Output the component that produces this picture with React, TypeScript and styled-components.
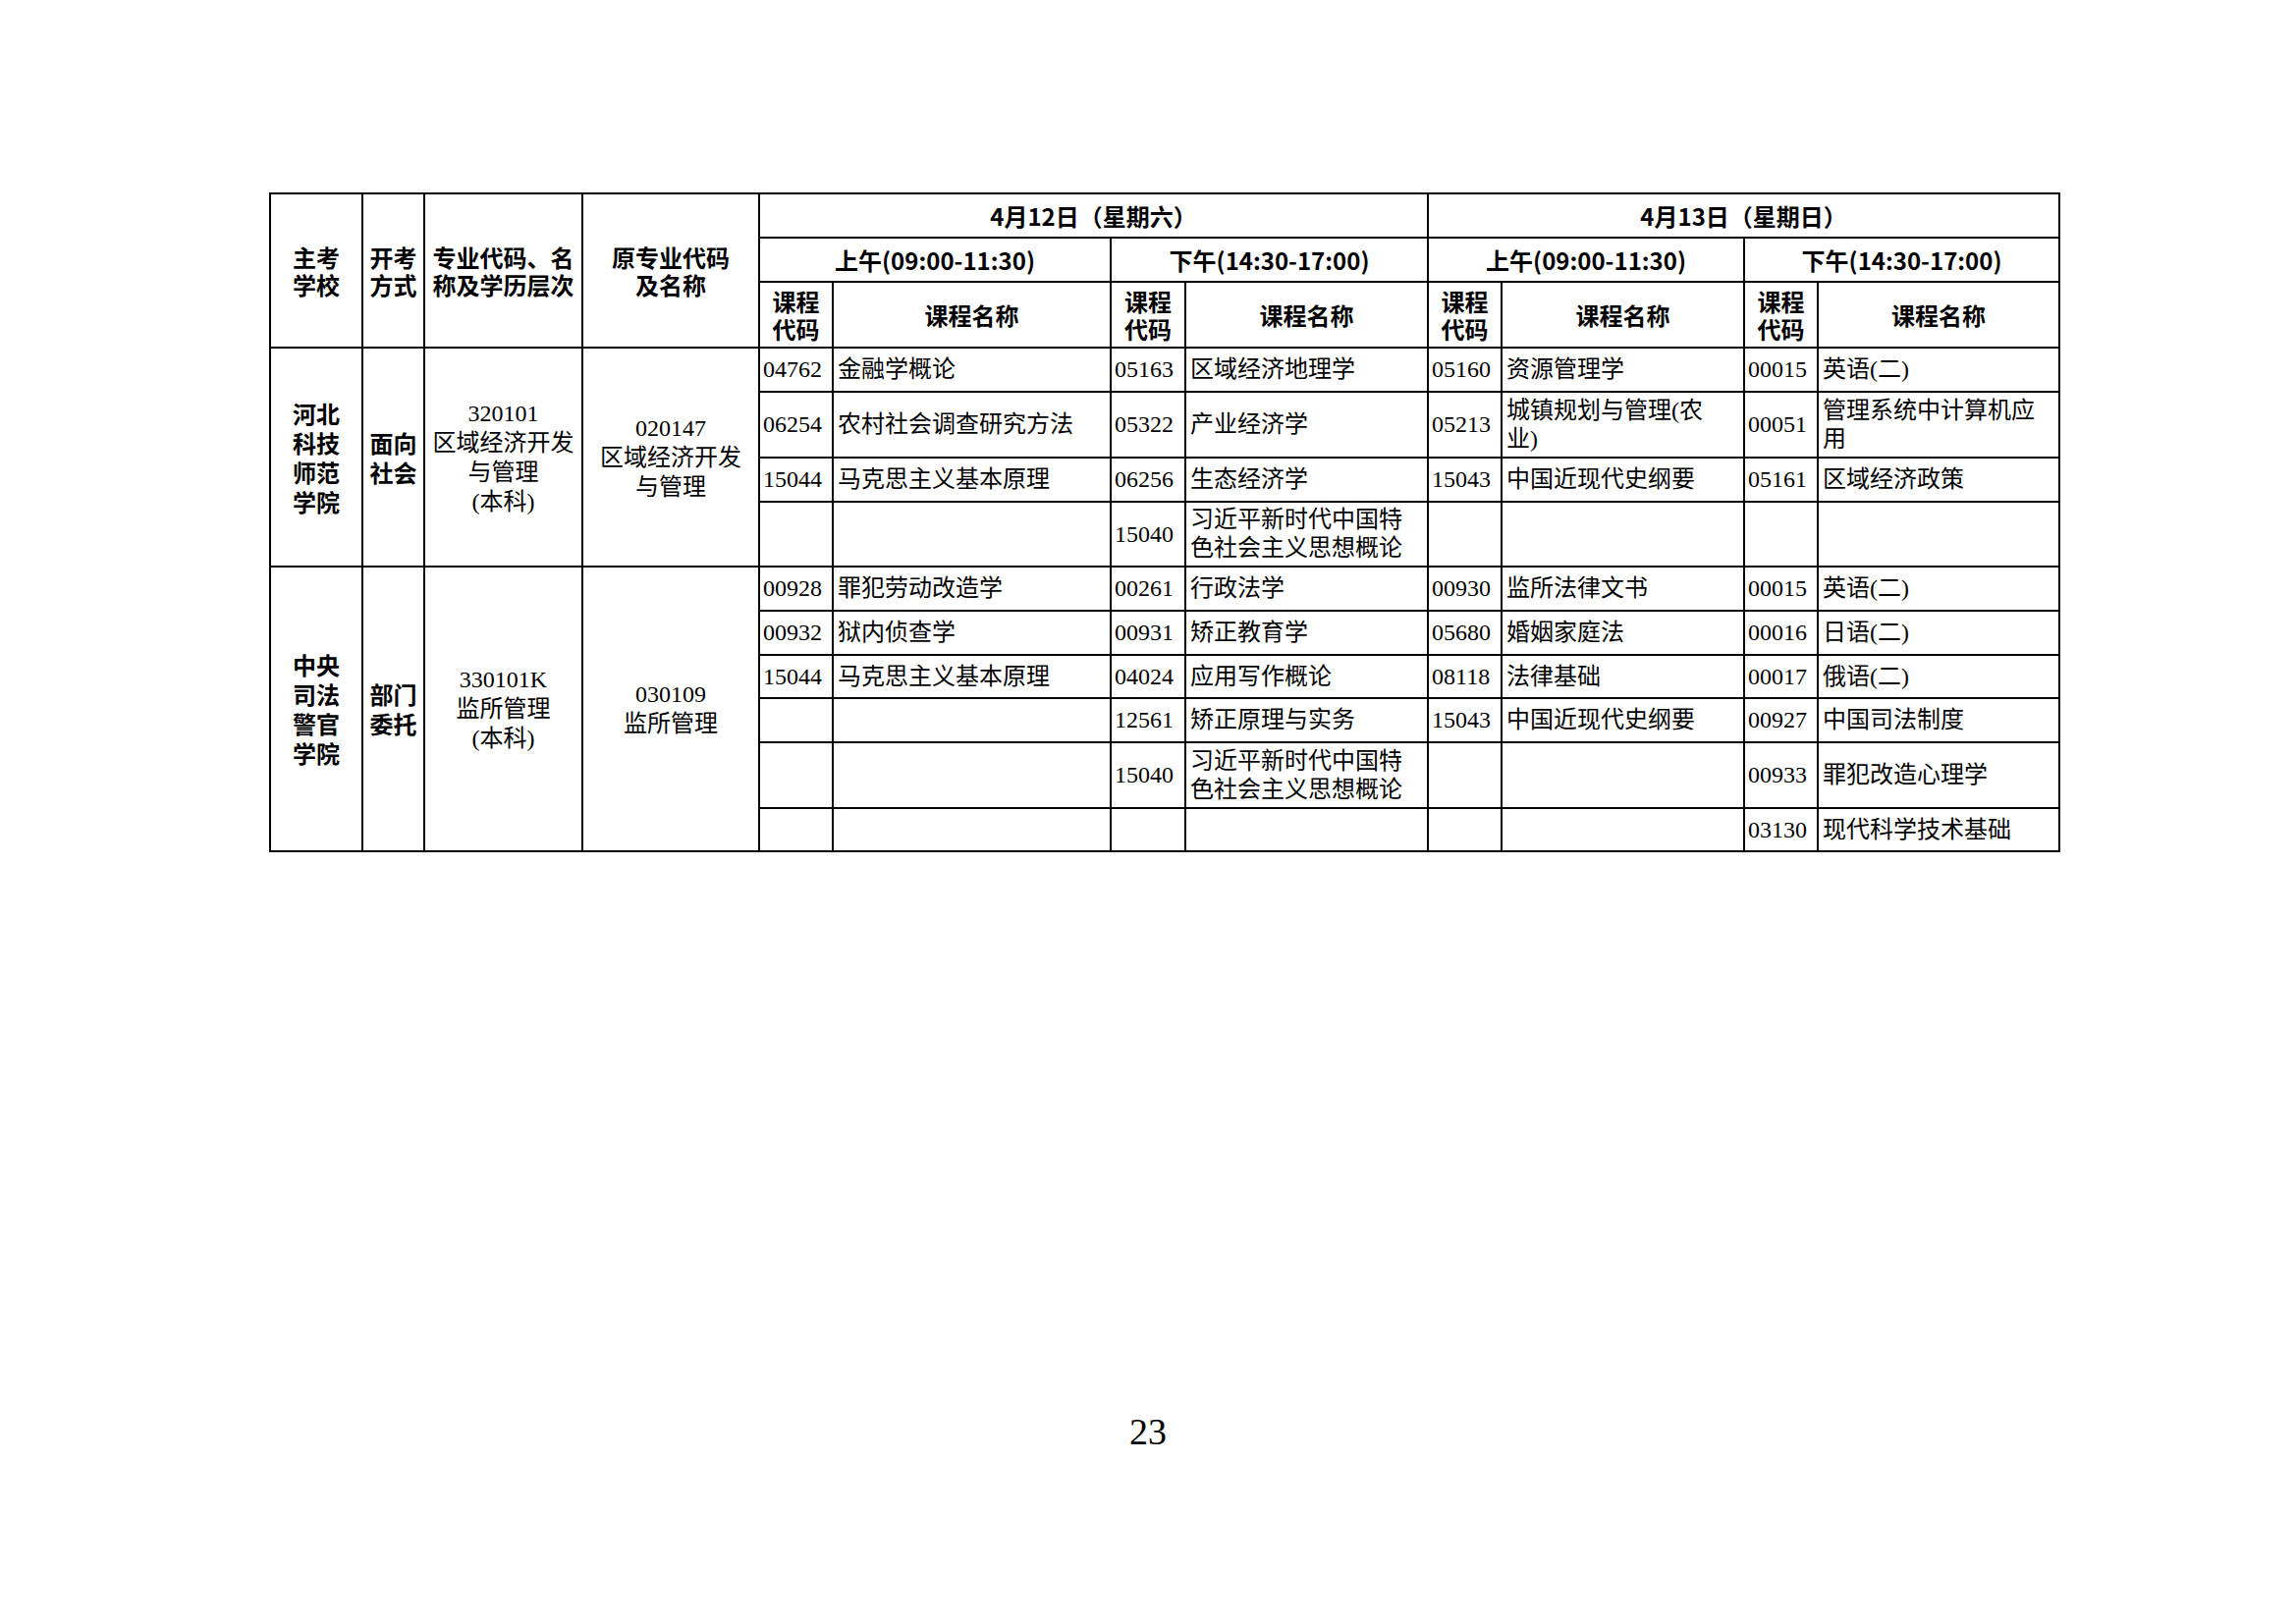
import { FC, Fragment } from 'react';
import styled, { createGlobalStyle } from 'styled-components';

const GlobalStyle = createGlobalStyle`
  html, body {
    margin: 0;
    padding: 0;
    background: #ffffff;
  }
`;

const SERIF = `"Liberation Serif", "Noto Sans CJK SC", serif`;
const HEI = `"Noto Sans CJK SC", "Liberation Sans", sans-serif`;

const Page = styled.div`
  width: 2338px;
  height: 1653px;
  padding-top: 196px;
  box-sizing: border-box;
  display: flex;
  flex-direction: column;
  color: #000;
`;

const TableWrap = styled.div`
  padding-left: 274px;
`;

const Schedule = styled.table`
  border-collapse: collapse;
  table-layout: fixed;
  width: 1824px;
  border: 2px solid #000;
`;

const Row = styled.tr<{ $h: number }>`
  height: ${({ $h }) => $h}px;
`;

const HeadCell = styled.th`
  border: 2px solid #000;
  padding: 0;
  font-family: ${HEI};
  font-weight: 700;
  font-size: 24px;
  line-height: 28px;
  text-align: center;
  vertical-align: middle;
  white-space: pre-line;
`;

const InfoCell = styled.td<{ $bold?: boolean }>`
  border: 2px solid #000;
  padding: 0;
  font-family: ${({ $bold }) => ($bold ? HEI : SERIF)};
  font-weight: ${({ $bold }) => ($bold ? 700 : 400)};
  font-size: 24px;
  line-height: 30px;
  text-align: center;
  vertical-align: middle;
  white-space: pre-line;
`;

const CodeCell = styled.td`
  border: 2px solid #000;
  padding: 0 0 0 3px;
  font-family: ${SERIF};
  font-size: 24px;
  line-height: 29px;
  text-align: left;
  vertical-align: middle;
`;

const NameCell = styled.td`
  border: 2px solid #000;
  padding: 0 4px;
  font-family: ${SERIF};
  font-size: 24px;
  line-height: 29px;
  text-align: left;
  vertical-align: middle;
  white-space: pre-line;
`;

const PageNumber = styled.div`
  margin-top: 571px;
  text-align: center;
  font-family: "Liberation Serif", serif;
  font-size: 38px;
  line-height: 38px;
`;

const colWidths = [94, 63, 161, 180, 75, 283, 76, 247, 75, 247, 75, 246];

type Course = [string, string];

interface Block {
  school: string;
  mode: string;
  major: string;
  origin: string;
  rows: { h: number; courses: Course[] }[];
}

const blocks: Block[] = [
  {
    school: '河北\n科技\n师范\n学院',
    mode: '面向\n社会',
    major: '320101\n区域经济开发\n与管理\n(本科)',
    origin: '020147\n区域经济开发\n与管理',
    rows: [
      {
        h: 45,
        courses: [
          ['04762', '金融学概论'],
          ['05163', '区域经济地理学'],
          ['05160', '资源管理学'],
          ['00015', '英语(二)'],
        ],
      },
      {
        h: 67,
        courses: [
          ['06254', '农村社会调查研究方法'],
          ['05322', '产业经济学'],
          ['05213', '城镇规划与管理(农\n业)'],
          ['00051', '管理系统中计算机应\n用'],
        ],
      },
      {
        h: 45,
        courses: [
          ['15044', '马克思主义基本原理'],
          ['06256', '生态经济学'],
          ['15043', '中国近现代史纲要'],
          ['05161', '区域经济政策'],
        ],
      },
      {
        h: 66,
        courses: [
          ['', ''],
          ['15040', '习近平新时代中国特\n色社会主义思想概论'],
          ['', ''],
          ['', ''],
        ],
      },
    ],
  },
  {
    school: '中央\n司法\n警官\n学院',
    mode: '部门\n委托',
    major: '330101K\n监所管理\n(本科)',
    origin: '030109\n监所管理',
    rows: [
      {
        h: 45,
        courses: [
          ['00928', '罪犯劳动改造学'],
          ['00261', '行政法学'],
          ['00930', '监所法律文书'],
          ['00015', '英语(二)'],
        ],
      },
      {
        h: 45,
        courses: [
          ['00932', '狱内侦查学'],
          ['00931', '矫正教育学'],
          ['05680', '婚姻家庭法'],
          ['00016', '日语(二)'],
        ],
      },
      {
        h: 44,
        courses: [
          ['15044', '马克思主义基本原理'],
          ['04024', '应用写作概论'],
          ['08118', '法律基础'],
          ['00017', '俄语(二)'],
        ],
      },
      {
        h: 45,
        courses: [
          ['', ''],
          ['12561', '矫正原理与实务'],
          ['15043', '中国近现代史纲要'],
          ['00927', '中国司法制度'],
        ],
      },
      {
        h: 67,
        courses: [
          ['', ''],
          ['15040', '习近平新时代中国特\n色社会主义思想概论'],
          ['', ''],
          ['00933', '罪犯改造心理学'],
        ],
      },
      {
        h: 44,
        courses: [
          ['', ''],
          ['', ''],
          ['', ''],
          ['03130', '现代科学技术基础'],
        ],
      },
    ],
  },
];

const sessions = ['上午(09:00-11:30)', '下午(14:30-17:00)', '上午(09:00-11:30)', '下午(14:30-17:00)'];

const BlockRows: FC<{ block: Block }> = ({ block }) => (
  <>
    {block.rows.map((row, i) => (
      <Row $h={row.h} key={i}>
        {i === 0 && (
          <>
            <InfoCell $bold rowSpan={block.rows.length}>{block.school}</InfoCell>
            <InfoCell $bold rowSpan={block.rows.length}>{block.mode}</InfoCell>
            <InfoCell rowSpan={block.rows.length}>{block.major}</InfoCell>
            <InfoCell rowSpan={block.rows.length}>{block.origin}</InfoCell>
          </>
        )}
        {row.courses.map(([code, name], j) => (
          <Fragment key={j}>
            <CodeCell>{code}</CodeCell>
            <NameCell>{name}</NameCell>
          </Fragment>
        ))}
      </Row>
    ))}
  </>
);

export default function App() {
  return (
    <Page>
      <GlobalStyle />
      <TableWrap>
        <Schedule>
          <colgroup>
            {colWidths.map((w, i) => (
              <col key={i} style={{ width: w }} />
            ))}
          </colgroup>
          <thead>
            <Row $h={45}>
              <HeadCell rowSpan={3}>{'主考\n学校'}</HeadCell>
              <HeadCell rowSpan={3}>{'开考\n方式'}</HeadCell>
              <HeadCell rowSpan={3}>{'专业代码、名\n称及学历层次'}</HeadCell>
              <HeadCell rowSpan={3}>{'原专业代码\n及名称'}</HeadCell>
              <HeadCell colSpan={4}>4月12日（星期六）</HeadCell>
              <HeadCell colSpan={4}>4月13日（星期日）</HeadCell>
            </Row>
            <Row $h={45}>
              {sessions.map((s, i) => (
                <HeadCell colSpan={2} key={i}>
                  {s}
                </HeadCell>
              ))}
            </Row>
            <Row $h={67}>
              {sessions.map((_, i) => (
                <Fragment key={i}>
                  <HeadCell>{'课程\n代码'}</HeadCell>
                  <HeadCell>课程名称</HeadCell>
                </Fragment>
              ))}
            </Row>
          </thead>
          <tbody>
            {blocks.map((b, i) => (
              <BlockRows block={b} key={i} />
            ))}
          </tbody>
        </Schedule>
      </TableWrap>
      <PageNumber>23</PageNumber>
    </Page>
  );
}
